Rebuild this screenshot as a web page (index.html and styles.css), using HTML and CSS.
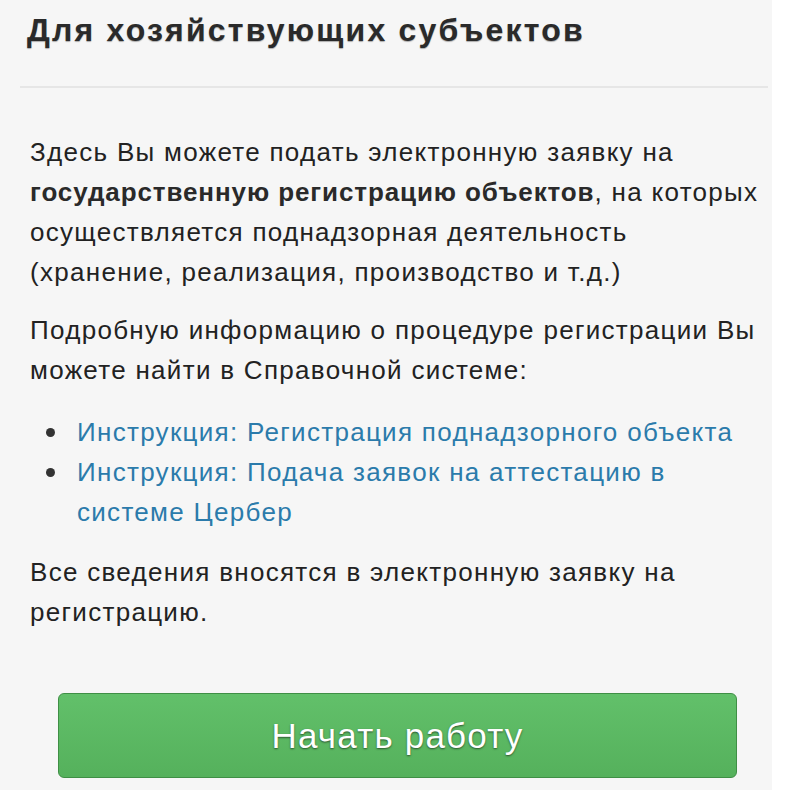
FILE: index.html
```html
<!DOCTYPE html>
<html lang="ru">
<head>
<meta charset="utf-8">
<link rel="stylesheet" href="styles.css">
</head>
<body>
<div class="panel">
  <h1 class="title">Для хозяйствующих субъектов</h1>
  <hr class="divider">
  <div class="content">
    <p>Здесь Вы можете подать электронную заявку на <b>государственную регистрацию объектов</b>, на которых осуществляется поднадзорная деятельность (хранение, реализация, производство и т.д.)</p>
    <p>Подробную информацию о процедуре регистрации Вы можете найти в Справочной системе:</p>
    <ul class="links">
      <li><a href="#">Инструкция: Регистрация поднадзорного объекта</a></li>
      <li><a href="#">Инструкция: Подача заявок на аттестацию в системе Цербер</a></li>
    </ul>
    <p>Все сведения вносятся в электронную заявку на регистрацию.</p>
  </div>
  <div class="actions">
    <a class="btn" href="#">Начать работу</a>
  </div>
</div>
</body>
</html>
```
FILE: styles.css
```css
html, body {
  margin: 0;
  padding: 0;
  background: #ffffff;
}
body {
  font-family: "Liberation Sans", Arial, sans-serif;
  color: #222;
}
.panel {
  width: 772px;
  height: 790px;
  box-sizing: border-box;
  background: #f6f6f6;
  padding: 10px 20px 0 20px;
}
.title {
  margin: 0;
  padding-left: 7px;
  font-size: 32px;
  font-weight: bold;
  line-height: 40px;
  color: #2a2a2a;
  letter-spacing: 2.2px;
  text-shadow: 0 1px 1px rgba(0,0,0,0.3);
}
.divider {
  margin: 36px 0 0 0;
  border: 0;
  border-top: 2px solid #e6e6e6;
  width: 748px;
}
.content {
  padding: 44px 0 0 10px;
  width: 742px;
  font-size: 26px;
  line-height: 40px;
  letter-spacing: 1.3px;
}
.content p {
  margin: 0 0 18px 0;
}
.content b {
  color: #2a2a2a;
  letter-spacing: 0.9px;
}
.links {
  list-style: none;
  margin: 22px 0 20px 0;
  padding-left: 16px;
}
.links li {
  display: flex;
  align-items: flex-start;
}
.links li::before {
  content: "";
  flex: none;
  width: 9px;
  height: 9px;
  border-radius: 50%;
  background: #333;
  margin: 16px 22px 0 0;
}
.links a {
  color: #2b7bab;
  text-decoration: none;
}
.actions {
  padding: 43px 0 0 38px;
}
.btn {
  display: flex;
  align-items: center;
  justify-content: center;
  width: 679px;
  height: 85px;
  box-sizing: border-box;
  border: 1px solid #3f8f45;
  border-radius: 6px;
  background: linear-gradient(#62c06a, #55b15c);
  color: #fff;
  font-size: 35px;
  letter-spacing: 1.2px;
  text-decoration: none;
  text-shadow: 0 1px 2px rgba(0,0,0,0.55);
}
```
